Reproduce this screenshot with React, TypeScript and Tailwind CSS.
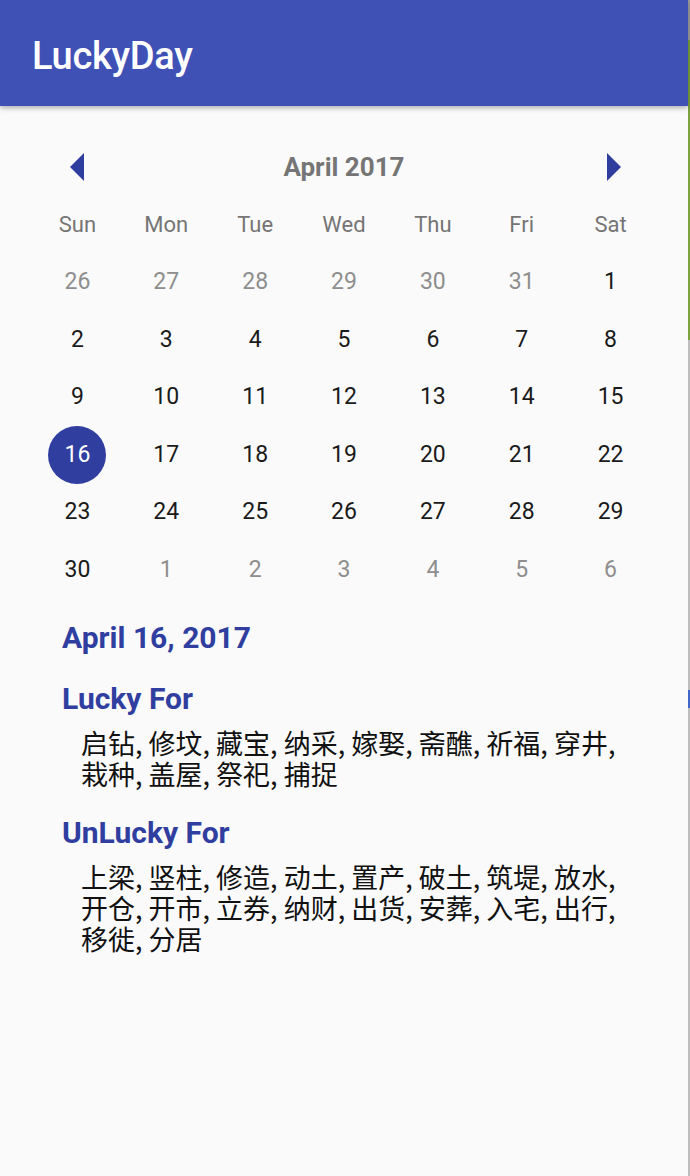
import React from "react";

const font = { fontFamily: "Roboto, 'Noto Sans CJK SC', sans-serif" };

const weeks: { d: number; out?: boolean }[][] = [
    [{ d: 26, out: true }, { d: 27, out: true }, { d: 28, out: true }, { d: 29, out: true }, { d: 30, out: true }, { d: 31, out: true }, { d: 1 }],
    [{ d: 2 }, { d: 3 }, { d: 4 }, { d: 5 }, { d: 6 }, { d: 7 }, { d: 8 }],
    [{ d: 9 }, { d: 10 }, { d: 11 }, { d: 12 }, { d: 13 }, { d: 14 }, { d: 15 }],
    [{ d: 16 }, { d: 17 }, { d: 18 }, { d: 19 }, { d: 20 }, { d: 21 }, { d: 22 }],
    [{ d: 23 }, { d: 24 }, { d: 25 }, { d: 26 }, { d: 27 }, { d: 28 }, { d: 29 }],
    [{ d: 30 }, { d: 1, out: true }, { d: 2, out: true }, { d: 3, out: true }, { d: 4, out: true }, { d: 5, out: true }, { d: 6, out: true }],
];

const days = ["Sun", "Mon", "Tue", "Wed", "Thu", "Fri", "Sat"];

const lucky = "启钻, 修坟, 藏宝, 纳采, 嫁娶, 斋醮, 祈福, 穿井, 栽种, 盖屋, 祭祀, 捕捉";
const unlucky = "上梁, 竖柱, 修造, 动土, 置产, 破土, 筑堤, 放水, 开仓, 开市, 立券, 纳财, 出货, 安葬, 入宅, 出行, 移徙, 分居";

function Arrow({ dir }: { dir: "left" | "right" }) {
    return (
        <svg width="14" height="28" viewBox="0 0 14 28">
            <polygon points={dir === "left" ? "14,0 0,14 14,28" : "0,0 14,14 0,28"} fill="#2F3D9E" />
        </svg>
    );
}

export default function App() {
    return (
        <div className="flex w-[690px] h-[1176px] overflow-hidden" style={font}>
            <div className="w-[688px] h-full bg-[#FAFAFA] flex flex-col">
                {/* App bar */}
                <div className="h-[106px] bg-[#3F51B5] flex items-center pl-[32px] shadow-[0_2px_5px_rgba(0,0,0,0.3)] relative z-10">
                    <span className="text-white text-[38px] font-medium tracking-[-0.3px] mt-[6px]">LuckyDay</span>
                </div>

                {/* Calendar */}
                <div className="px-[33px] pt-[32px]">
                    <div className="flex items-center h-[58px]">
                        <div className="w-[88.7px] flex justify-center"><Arrow dir="left" /></div>
                        <div className="flex-1 text-center text-[26px] font-bold text-[#757575]">April 2017</div>
                        <div className="w-[88.7px] flex justify-center pl-[6px]"><Arrow dir="right" /></div>
                    </div>
                    <div className="grid grid-cols-7">
                        {days.map((d) => (
                            <div key={d} className="h-[57.5px] flex items-center justify-center text-[22px] text-[#757575]">{d}</div>
                        ))}
                    </div>
                    {weeks.map((w, i) => (
                        <div key={i} className="grid grid-cols-7">
                            {w.map((c, j) => {
                                const selected = !c.out && c.d === 16;
                                return (
                                    <div key={j} className="h-[57.5px] flex items-center justify-center">
                                        {selected ? (
                                            <div className="w-[58px] h-[58px] rounded-full bg-[#303F9F] text-white flex items-center justify-center text-[23px]">{c.d}</div>
                                        ) : (
                                            <span className={c.out ? "text-[23px] text-[#8E8E8E]" : "text-[23px] text-[#1A1A1A]"}>{c.d}</span>
                                        )}
                                    </div>
                                );
                            })}
                        </div>
                    ))}
                </div>

                {/* Details */}
                <div className="pl-[62px] pr-[48px]">
                    <h2 className="mt-[21px] text-[30px] leading-[36px] font-bold text-[#303F9F]">April 16, 2017</h2>
                    <h3 className="mt-[25px] text-[30px] leading-[36px] font-bold text-[#303F9F]">Lucky For</h3>
                    <p className="mt-[10.5px] pl-[19px] text-[27px] leading-[31px] text-[#111]" style={{ fontFamily: "'Noto Sans CJK SC', sans-serif" }}>{lucky}</p>
                    <h3 className="mt-[25.5px] text-[30px] leading-[36px] font-bold text-[#303F9F]">UnLucky For</h3>
                    <p className="mt-[10.5px] pl-[19px] text-[27px] leading-[31px] text-[#111]" style={{ fontFamily: "'Noto Sans CJK SC', sans-serif" }}>{unlucky}</p>
                </div>
            </div>

            {/* edge of the window behind */}
            <div className="w-[2px] h-full flex flex-col bg-[#BDBDBD]">
                <div className="h-[40px] bg-[#9E9E9E]" />
                <div className="h-[300px] bg-[#7CA33E]" />
                <div className="h-[350px]" />
                <div className="h-[18px] bg-[#3F66C8]" />
            </div>
        </div>
    );
}
